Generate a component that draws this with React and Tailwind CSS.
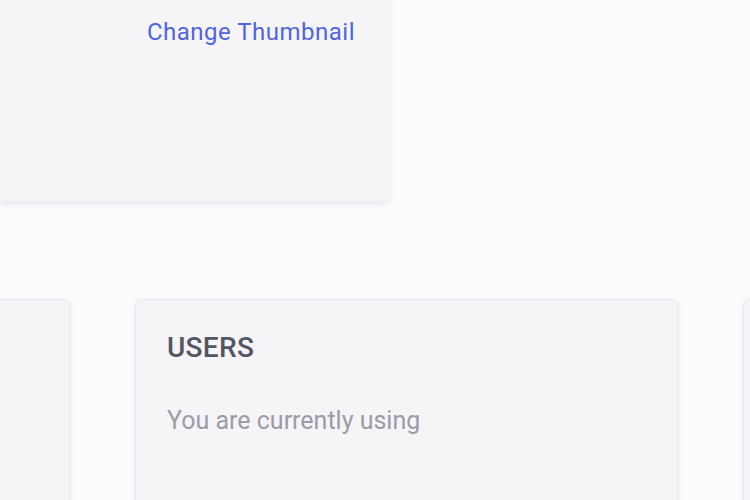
export default function App() {
  return (
    <main
      className="h-[500px] w-[750px] overflow-hidden bg-[#fcfcfd]"
      style={{ fontFamily: "Roboto, 'Liberation Sans', sans-serif" }}
    >
      <section className="flex h-[201px] w-[389px] justify-end rounded-br-md bg-[#f5f5f7] pr-[34px] pt-[16px] shadow-[0_3px_8px_rgba(120,120,160,0.18)]">
        <button className="h-[32px] text-[24px] leading-[32px] tracking-[0.5px] text-[#5064e0]">
          Change Thumbnail
        </button>
      </section>

      <div className="mt-[98px] flex gap-[65px] ml-[-473px]">
        <div className="h-[240px] w-[543px] shrink-0 rounded-md border border-[#e9e7fa] bg-[#f5f5f7] shadow-[0_2px_6px_rgba(120,120,170,0.15)]" />
        <div className="h-[240px] w-[543px] shrink-0 rounded-md border border-[#e9e7fa] bg-[#f5f5f7] px-[31px] pt-[30px] shadow-[0_2px_6px_rgba(120,120,170,0.15)]">
          <h2 className="text-[28px] font-medium leading-[36px] tracking-[0.3px] text-[#545463]">USERS</h2>
          <p className="mt-[39px] text-[25px] leading-[32px] text-[#9c9ba8]">You are currently using</p>
        </div>
        <div className="h-[240px] w-[543px] shrink-0 rounded-md border border-[#e9e7fa] bg-[#f5f5f7] shadow-[0_2px_6px_rgba(120,120,170,0.15)]" />
      </div>
    </main>
  );
}
